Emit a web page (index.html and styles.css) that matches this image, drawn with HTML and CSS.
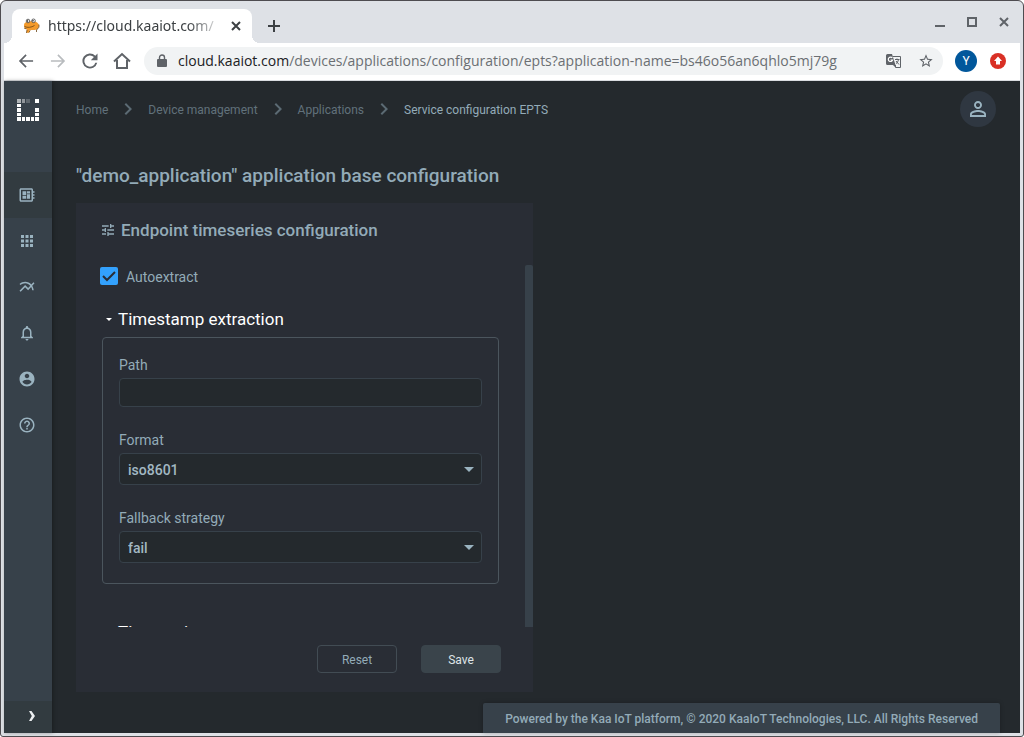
FILE: index.html
```html
<!DOCTYPE html>
<html lang="en">
<head>
<meta charset="utf-8">
<title>Service configuration EPTS</title>
<link rel="stylesheet" href="styles.css">
</head>
<body>
<div class="window">
  <div class="tabstrip">
    <div class="tab">
      <svg class="favicon" width="17" height="16" viewBox="0 0 17 16"><path d="M1 7c0-2 2-3.500 5-3.500C9 3 14 3 15.500 6c1 2 0 4.500-2 5.500-2 .8-4 .5-5 .5l-2 .5-1 2.500-2-.5.500-3C2 10.500.8 9 1 7z" fill="#f39a2b"/><path d="M1.500 8.500c3 1.500 7 1 10-1M1 10l2.500 1M13.500 11.500v2.500M4 12l-.5 3M6 14.500l1-2M15.800 6.500c.6 2 0 4-2 5" fill="none" stroke="#6b4414" stroke-width=".8"/><circle cx="5" cy="3" r="1.800" fill="#fff" stroke="#444" stroke-width=".8"/><circle cx="10.500" cy="2.800" r="1.800" fill="#fff" stroke="#444" stroke-width=".8"/><circle cx="4.600" cy="3" r=".7"/><circle cx="10" cy="2.800" r=".7"/></svg>
      <span class="tab-title">https://cloud.kaaiot.com/</span>
      <button class="icon-btn" aria-label="Close tab"><svg width="10" height="10" viewBox="0 0 10 10"><path d="M1 1l8 8M9 1L1 9" stroke="#3c4043" stroke-width="2"/></svg></button>
    </div>
    <button class="icon-btn new-tab" aria-label="New tab"><svg width="12" height="12" viewBox="0 0 12 12"><path d="M6 0v12M0 6h12" stroke="#3c4043" stroke-width="2"/></svg></button>
    <div class="window-controls">
      <button class="icon-btn" aria-label="Minimize"><svg width="10" height="10" viewBox="0 0 10 10"><path d="M0 9h10" stroke="#5f6368" stroke-width="2"/></svg></button>
      <button class="icon-btn" aria-label="Maximize"><svg width="10" height="10" viewBox="0 0 10 10"><path d="M1 1h8v8H1z" fill="none" stroke="#5f6368" stroke-width="2"/></svg></button>
      <button class="icon-btn" aria-label="Close window"><svg width="10" height="10" viewBox="0 0 10 10"><path d="M1 1l8 8M9 1L1 9" stroke="#5f6368" stroke-width="2"/></svg></button>
    </div>
  </div>
  <div class="toolbar">
    <button class="icon-btn" aria-label="Back"><svg width="20" height="20" viewBox="0 0 24 24" fill="#5f6368"><path d="M20.500 11H7.200l5.600-5.600L11.400 4 3.400 12l8 8 1.400-1.400L7.200 13h13.300z"/></svg></button>
    <button class="icon-btn" aria-label="Forward"><svg width="20" height="20" viewBox="0 0 24 24" fill="#b9bcbf"><path d="M3.500 11h13.300l-5.600-5.600L12.600 4l8 8-8 8-1.400-1.400 5.600-5.600H3.500z"/></svg></button>
    <button class="icon-btn" aria-label="Reload"><svg width="20" height="20" viewBox="0 0 24 24" fill="#5f6368"><path d="M18.400 5.600A9 9 0 1 0 20.700 14h-2.300A6.700 6.700 0 1 1 16.700 7.300L13 11h8V3z"/></svg></button>
    <button class="icon-btn" aria-label="Home page"><svg width="20" height="20" viewBox="0 0 20 20"><path d="M2 10.500L10 3l8 7.500M5 9v8h10V9" fill="none" stroke="#5f6368" stroke-width="2"/></svg></button>
    <div class="address">
      <svg width="10" height="14" viewBox="0 0 10 14"><path d="M1 5h8a1 1 0 0 1 1 1v6a1 1 0 0 1-1 1H1a1 1 0 0 1-1-1V6a1 1 0 0 1 1-1z" fill="#5f6368"/><path d="M2.500 5.500V3.500a2.500 2.500 0 0 1 5 0v2" fill="none" stroke="#5f6368" stroke-width="1.400"/></svg>
      <span class="url"><span class="host">cloud.kaaiot.com</span>/devices/applications/configuration/epts?application-name=bs46o56an6qhlo5mj79g</span>
      <button class="icon-btn" aria-label="Translate this page"><svg width="16" height="16" viewBox="0 0 16 16"><path d="M7 3.500h7.500v11H9.500" fill="#f1f3f4" stroke="#5f6368"/><path d="M1.500 1H6l3.500 11h-8A1.500 1.500 0 0 1 0 10.500v-8A1.500 1.500 0 0 1 1.500 1z" fill="#5f6368"/><path d="M7 12l3 3v-3z" fill="#5f6368"/><path d="M6.300 5A2.200 2.200 0 1 0 6.600 7H4.500" fill="none" stroke="#fff" stroke-width="1.200"/><path d="M9 6.500h4.500M11 5.500v1M12.500 6.500c-.3 2-1.500 3.500-2.500 4.300M10 8l3 3.500" fill="none" stroke="#5f6368"/></svg></button>
      <button class="icon-btn" aria-label="Bookmark this page"><svg width="16" height="16" viewBox="0 0 24 24" fill="#5f6368"><path d="M22 9.240l-7.190-.62L12 2 9.190 8.630 2 9.240l5.460 4.730L5.820 21 12 17.270 18.180 21l-1.630-7.030L22 9.240zM12 15.400l-3.760 2.270 1-4.280-3.320-2.880 4.380-.38L12 6.100l1.710 4.040 4.380.38-3.320 2.880 1 4.280L12 15.400z"/></svg></button>
    </div>
    <button class="profile" aria-label="Profile Y">Y</button>
    <button class="icon-btn update" aria-label="Update"><svg width="16" height="16" viewBox="0 0 16 16"><circle cx="8" cy="8" r="8" fill="#d93025"/><path d="M8 3.500L12 8h-2v3.500H6V8H4z" fill="#fff"/></svg></button>
  </div>
  <div class="app">
    <nav class="sidebar" aria-label="Main">
      <a class="logo" href="#" aria-label="Kaa"><svg width="22" height="22" viewBox="0 0 22 22" fill="#fff"><path d="M18 0h4v4h-4zM0 5h4v3H0zM0 9h4v4H0zM0 14h4v3H0zM18 9h4v4h-4zM18 14h4v3h-4zM0 18h4v4H0zM5 18h3v4H5zM9 18h4v4H9zM14 18h3v4h-3zM18 18h4v4h-4z"/><path d="M0 0h4v4H0z" opacity=".6"/><path d="M5 0h3v4H5z" opacity=".45"/><path d="M9 0h4v4H9z" opacity=".2"/></svg></a>
      <a class="nav-item active" href="#" aria-label="Device management"><svg width="18" height="18" viewBox="0 0 24 24"><path d="M22 9V7h-2V5c0-1.100-.9-2-2-2H4c-1.100 0-2 .9-2 2v14c0 1.100.9 2 2 2h14c1.100 0 2-.9 2-2v-2h2v-2h-2v-2h2v-2h-2V9h2zm-4 10H4V5h14v14zM6 13h5v4H6zm6-6h4v3h-4zM6 7h5v5H6zm6 4h4v6h-4z"/></svg></a>
      <a class="nav-item" href="#" aria-label="Apps"><svg width="18" height="18" viewBox="0 0 24 24"><path d="M4 8h4V4H4v4zm6 12h4v-4h-4v4zm-6 0h4v-4H4v4zm0-6h4v-4H4v4zm6 0h4v-4h-4v4zm6-10v4h4V4h-4zm-6 4h4V4h-4v4zm6 6h4v-4h-4v4zm0 6h4v-4h-4v4z"/></svg></a>
      <a class="nav-item" href="#" aria-label="Charts"><svg width="18" height="18" viewBox="0 0 24 24"><path d="M22 6.920l-1.410-1.410-2.850 3.210C15.680 6.400 12.830 5 9.610 5 6.720 5 4.070 6.160 2 8l1.420 1.420C5.120 7.930 7.270 7 9.610 7c2.740 0 5.090 1.260 6.770 3.240l-2.880 3.240-4-4L2 16.990l1.500 1.500 6-6.010 4 4 4.050-4.550c.75 1.350 1.250 2.900 1.440 4.550H21c-.22-2.300-.95-4.390-2.040-6.140L22 6.920z"/></svg></a>
      <a class="nav-item" href="#" aria-label="Notifications"><svg width="18" height="18" viewBox="0 0 24 24"><path d="M12 22c1.100 0 2-.9 2-2h-4c0 1.100.9 2 2 2zm6-6v-5c0-3.070-1.630-5.640-4.500-6.320V4c0-.83-.67-1.500-1.500-1.500s-1.500.67-1.500 1.500v.68C7.640 5.360 6 7.920 6 11v5l-2 2v1h16v-1l-2-2zm-2 1H8v-6c0-2.480 1.510-4.500 4-4.500s4 2.020 4 4.500v6z"/></svg></a>
      <a class="nav-item" href="#" aria-label="Account"><svg width="18" height="18" viewBox="0 0 24 24"><path d="M12 2C6.480 2 2 6.480 2 12s4.480 10 10 10 10-4.480 10-10S17.520 2 12 2zm0 3c1.660 0 3 1.340 3 3s-1.340 3-3 3-3-1.340-3-3 1.340-3 3-3zm0 14.200c-2.500 0-4.710-1.280-6-3.220.03-1.990 4-3.080 6-3.080 1.990 0 5.970 1.090 6 3.080-1.290 1.940-3.500 3.220-6 3.220z"/></svg></a>
      <a class="nav-item" href="#" aria-label="Help"><svg width="18" height="18" viewBox="0 0 24 24"><path d="M11 18h2v-2h-2v2zm1-16C6.480 2 2 6.480 2 12s4.480 10 10 10 10-4.480 10-10S17.520 2 12 2zm0 18c-4.410 0-8-3.590-8-8s3.590-8 8-8 8 3.590 8 8-3.590 8-8 8zm0-14c-2.210 0-4 1.790-4 4h2c0-1.100.9-2 2-2s2 .9 2 2c0 2-3 1.750-3 5h2c0-2.250 3-2.500 3-5 0-2.210-1.790-4-4-4z"/></svg></a>
      <button class="expand" aria-label="Expand menu"><svg width="6" height="10" viewBox="0 0 6 10"><path d="M0 0h2.500L6 5l-3.500 5H0l2.800-5z" fill="#eceff1"/></svg></button>
    </nav>
    <main class="main">
      <header class="header">
        <nav class="crumbs" aria-label="Breadcrumb">
          <a href="#">Home</a>
          <svg width="24" height="24" viewBox="0 0 24 24"><path d="M10 6L8.590 7.410 13.170 12l-4.580 4.590L10 18l6-6z"/></svg>
          <a href="#">Device management</a>
          <svg width="24" height="24" viewBox="0 0 24 24"><path d="M10 6L8.590 7.410 13.170 12l-4.580 4.590L10 18l6-6z"/></svg>
          <a href="#">Applications</a>
          <svg width="24" height="24" viewBox="0 0 24 24"><path d="M10 6L8.590 7.410 13.170 12l-4.580 4.590L10 18l6-6z"/></svg>
          <a class="current" href="#" aria-current="page">Service configuration EPTS</a>
        </nav>
        <button class="avatar" aria-label="User menu"><svg width="24" height="24" viewBox="0 0 24 24"><path d="M12 5.900c1.160 0 2.100.94 2.100 2.100s-.94 2.100-2.100 2.100S9.900 9.160 9.900 8s.94-2.100 2.100-2.100m0 9c2.970 0 6.100 1.460 6.100 2.100v1.100H5.900V17c0-.64 3.130-2.100 6.100-2.100M12 4C9.790 4 8 5.790 8 8s1.790 4 4 4 4-1.790 4-4-1.790-4-4-4zm0 9c-2.670 0-8 1.340-8 4v3h16v-3c0-2.660-5.330-4-8-4z"/></svg></button>
      </header>
      <h1 class="title">"demo_application" application base configuration</h1>
      <form class="card" onsubmit="return false">
        <h2 class="card-title"><svg width="16" height="16" viewBox="0 0 24 24"><path d="M3 17v2h6v-2H3zM3 5v2h10V5H3zm10 16v-2h8v-2h-8v-2h-2v6h2zM7 9v2H3v2h4v2h2V9H7zm14 4v-2H11v2h10zm-6-4h2V7h4V5h-4V3h-2v6z"/></svg>Endpoint timeseries configuration</h2>
        <div class="scroll">
          <div class="fields">
            <label class="check"><input type="checkbox" checked>Autoextract</label>
            <details class="group" open>
              <summary>Timestamp extraction</summary>
              <div class="box">
                <div class="field"><label for="path">Path</label><input id="path" type="text"></div>
                <div class="field"><label for="format">Format</label><select id="format"><option>iso8601</option></select></div>
                <div class="field"><label for="fallback">Fallback strategy</label><select id="fallback"><option>fail</option></select></div>
              </div>
            </details>
            <details class="group">
              <summary>Time series</summary>
            </details>
          </div>
          <div class="scrollbar"></div>
        </div>
        <div class="actions">
          <button class="btn" type="reset">Reset</button>
          <button class="btn primary" type="submit">Save</button>
        </div>
      </form>
      <footer class="footer">Powered by the Kaa IoT platform, © 2020 KaaIoT Technologies, LLC. All Rights Reserved</footer>
    </main>
  </div>
</div>
</body>
</html>
```
FILE: styles.css
```css
* { box-sizing: border-box; }
body { margin: 0; background: #fff; font-family: Roboto, "Liberation Sans", sans-serif; }
button { font-family: inherit; border: 0; padding: 0; background: none; }
svg { display: block; flex: none; }

.window {
  height: 100vh;
  display: flex;
  flex-direction: column;
  border: 1px solid #4e4c50;
  border-radius: 6px 6px 3px 3px;
  background: #dee1e6;
  padding: 0 3px 3px;
  overflow: hidden;
}
.icon-btn { display: flex; align-items: center; justify-content: center; flex: none; }

.tabstrip { display: flex; align-items: center; height: 42px; padding: 8px 0 0 8px; flex: none; }
.tab {
  position: relative;
  display: flex;
  align-items: center;
  width: 240px;
  height: 34px;
  padding: 0 11px;
  gap: 8px;
  background: #fff;
  border-radius: 8px 8px 0 0;
}
.tab::before, .tab::after { content: ""; position: absolute; bottom: 0; width: 8px; height: 8px; }
.tab::before { left: -8px; background: radial-gradient(circle at 0 0, transparent 8px, #fff 8px); }
.tab::after { right: -8px; background: radial-gradient(circle at 100% 0, transparent 8px, #fff 8px); }
.tab-title {
  flex: 1;
  min-width: 0;
  overflow: hidden;
  white-space: nowrap;
  font: 14px/20px "Noto Sans", sans-serif;
  color: #3c4043;
  -webkit-mask-image: linear-gradient(90deg, #000 80%, transparent);
  mask-image: linear-gradient(90deg, #000 80%, transparent);
}
.new-tab { margin-left: 16px; }
.window-controls { display: flex; gap: 22px; margin: 0 11px 8px auto; }

.toolbar {
  display: flex;
  align-items: center;
  gap: 12px;
  height: 38px;
  padding: 0 14px 1px 12px;
  background: #fff;
  border-bottom: 1px solid #dadce0;
  flex: none;
}
.address {
  flex: 1;
  min-width: 0;
  display: flex;
  align-items: center;
  gap: 16px;
  height: 28px;
  padding: 0 9px 0 13px;
  border-radius: 14px;
  background: #f1f3f4;
}
.address > svg { margin-right: -5px; }
.url { flex: 1; min-width: 0; overflow: hidden; white-space: nowrap; font: 14px/20px "Open Sans", sans-serif; color: #6b6f73; }
.host { color: #202124; }
.profile { width: 22px; height: 22px; border-radius: 50%; background: #01579b; color: #fff; font-size: 12px; line-height: 22px; }
.update { margin-left: 1px; }

.app { flex: 1; min-height: 0; display: flex; background: #24292d; }
.sidebar { width: 48px; flex: none; display: flex; flex-direction: column; background: #37414a; box-shadow: 1px 0 4px rgba(0, 0, 0, .3); }
.logo { height: 91px; padding: 18px 13px; }
.nav-item { display: flex; align-items: center; justify-content: center; height: 46px; padding-right: 3px; }
.nav-item svg { fill: #9ab3c0; }
.nav-item.active { background: #323b40; }
.expand { display: flex; align-items: center; height: 32px; margin-top: auto; padding: 0 0 2px 25px; background: #323b40; }

.main { flex: 1; min-width: 0; display: flex; flex-direction: column; padding: 0 20px 0 24px; }
.header { display: flex; align-items: center; justify-content: space-between; height: 56px; padding-right: 4px; flex: none; }
.crumbs { display: flex; align-items: center; gap: 8px; font-size: 12px; line-height: 20px; }
.crumbs a { padding-top: 2px; color: #61717b; text-decoration: none; }
.crumbs .current { color: #93abb8; }
.crumbs svg { fill: #5b6a73; }
.avatar { width: 36px; height: 36px; border-radius: 50%; background: #2f3741; display: flex; align-items: center; justify-content: center; }
.avatar svg { fill: #9ab3c0; }
.title { margin: 27px 0 15px; font-size: 19px; line-height: 24px; font-weight: 500; color: #93abb8; }

.card {
  flex: 1;
  min-height: 0;
  width: 100%;
  max-width: 457px;
  display: flex;
  flex-direction: column;
  padding: 15px 0 19px;
  margin-bottom: 11px;
  background: #292d35;
}
.card-title { display: flex; align-items: center; gap: 5px; margin: 0 24px 23px; font-size: 17px; line-height: 24px; font-weight: 500; color: #93abb8; }
.card-title svg { fill: #93abb8; }
.scroll { flex: 1; min-height: 0; display: flex; overflow: hidden; }
.fields { flex: 1; min-width: 0; padding: 2px 26px 0 24px; }
.scrollbar { width: 8px; flex: none; background: #37414a; border-radius: 2px 2px 0 0; }

.check { display: flex; align-items: center; gap: 8px; font-size: 14px; line-height: 20px; color: #93abb8; }
.check input {
  appearance: none;
  width: 18px;
  height: 18px;
  margin: 0 0 2px;
  border-radius: 2px;
  background: #33a1fd url("data:image/svg+xml,%3Csvg xmlns='http://www.w3.org/2000/svg' viewBox='0 0 18 18'%3E%3Cpath d='M3 9l4 4 8-8' fill='none' stroke='%23292d35' stroke-width='2'/%3E%3C/svg%3E");
}
.group { margin: 20px 0 36px 2px; }
.group + .group { margin-top: 0; }
.group summary { display: flex; align-items: center; gap: 5px; padding-left: 4px; list-style: none; font-size: 17px; line-height: 24px; color: #fff; }
.group summary::before { content: ""; border: solid transparent; border-width: 3px 3px 0; border-top-color: #fff; margin-right: 1px; }
.box { display: flex; flex-direction: column; gap: 23px; margin-top: 6px; padding: 17px 16px 20px; border: 1px solid #4b555d; border-radius: 4px; }
.field { display: flex; flex-direction: column; gap: 3px; }
.field label { font-size: 14px; line-height: 20px; color: #93abb8; }
.field input, .field select {
  width: 100%;
  height: 32px;
  padding: 2px 8px 0;
  border: 1px solid #37414a;
  border-radius: 4px;
  background: #24292d;
  color: #a2b8c3;
  font: 500 14px/20px Roboto, sans-serif;
  appearance: none;
}
.field input { height: 29px; }
.field select { background: #24292d url("data:image/svg+xml,%3Csvg xmlns='http://www.w3.org/2000/svg' width='10' height='5'%3E%3Cpath d='M0 0h10L5 5z' fill='%239ab3c0'/%3E%3C/svg%3E") no-repeat right 7px center; }

.actions { display: flex; justify-content: flex-end; gap: 24px; padding: 18px 32px 0; }
.btn { width: 80px; height: 28px; padding-top: 2px; border: 1px solid #424c54; border-radius: 4px; font-size: 12px; color: #93abb8; }
.primary { background: #3a444b; border-color: #3a444b; color: #dfe5e8; }

.footer { align-self: flex-end; padding: 6px 22px 4px; border-radius: 2px 2px 0 0; background: #37414a; box-shadow: 0 0 4px rgba(0, 0, 0, .25); font-size: 12px; line-height: 20px; font-weight: 500; color: #93abb8; }
```
